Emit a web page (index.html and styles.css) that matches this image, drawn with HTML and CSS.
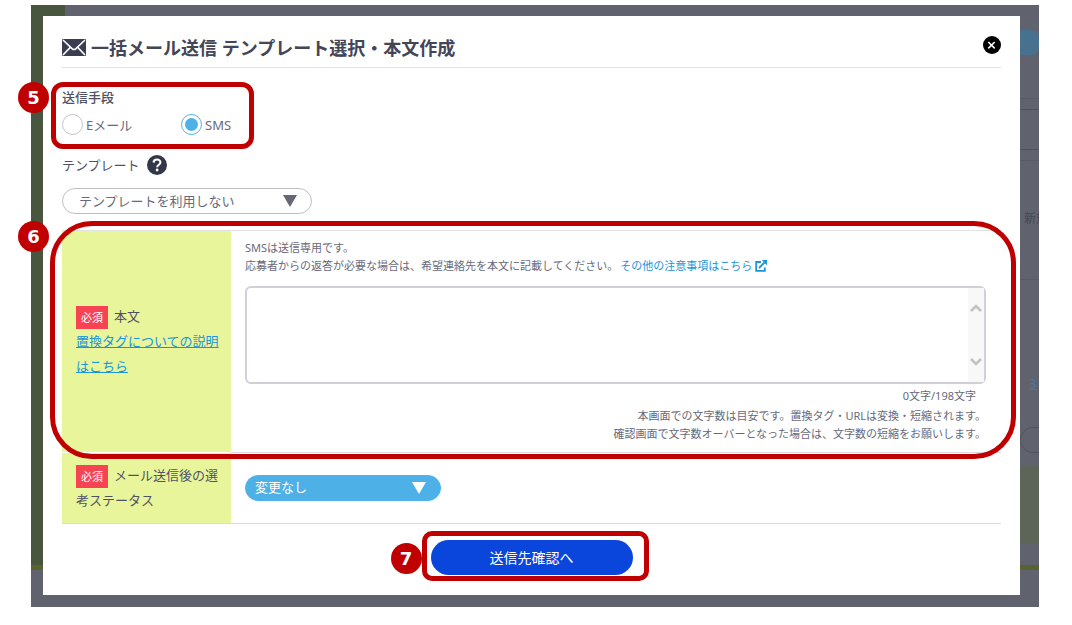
FILE: index.html
```html
<!DOCTYPE html>
<html lang="ja">
<head>
  <meta charset="UTF-8" />
  <meta name="viewport" content="width=device-width, initial-scale=1" />
  <title>一括メール送信</title>
  <link rel="stylesheet" href="styles.css">
</head>
<body>
  <div class="screen">
    <!-- Dimmed page behind the modal -->
    <div class="backdrop">
      <div class="back-main">
        <div class="back-sidebar"></div>
        <div class="back-content">
          <div class="back-button"></div>
          <div class="back-filter"><div class="back-field"></div></div>
          <div class="back-heading">新規</div>
          <div class="back-row"><a href="#">3</a></div>
          <div class="back-pill"></div>
          <div class="back-green"></div>
        </div>
      </div>
      <div class="back-footer"></div>
    </div>

    <form class="modal">
      <header class="modal-header">
        <h1>
          <svg class="mail-icon" viewBox="0 0 24 18" width="24" height="18" aria-hidden="true">
            <rect width="24" height="17" rx="1" fill="#3b3e50" />
            <path d="M1 1 L10.3 9.8 Q12 11.2 13.7 9.8 L23 1 M1 16 L8.3 8.4 M23 16 L15.7 8.4" fill="none" stroke="#fff" stroke-width="1.6" />
          </svg>
          一括メール送信 テンプレート選択・本文作成
        </h1>
        <button type="button" class="close" aria-label="閉じる">
          <svg viewBox="0 0 18 18" width="18" height="18">
            <circle cx="9" cy="9" r="9" />
            <path d="M5.3 6 L11.7 12.4 M11.7 6 L5.3 12.4" stroke="#fff" stroke-width="1.5" />
          </svg>
        </button>
      </header>

      <div class="method-box">
        <fieldset class="method">
          <legend>送信手段</legend>
          <div class="radios">
            <label><input type="radio" name="method" value="mail" />Eメール</label>
            <label><input type="radio" name="method" value="sms" checked />SMS</label>
          </div>
        </fieldset>
        <span class="frame"></span>
        <span class="step">5</span>
      </div>

      <div class="template-label">
        <label for="template">テンプレート</label>
        <svg viewBox="0 0 20 20" width="20" height="20" aria-hidden="true">
          <circle cx="10" cy="10" r="10" fill="#343747" />
          <path d="M6.6 7.6 C6.7 3.6 13.4 3.6 13.4 7.4 C13.4 9.7 10.2 9.8 10.2 12.2" fill="none" stroke="#fff" stroke-width="2.1" />
          <circle cx="10.1" cy="15" r="1.4" fill="#fff" />
        </svg>
      </div>
      <div class="select template-select">
        <select id="template"><option>テンプレートを利用しない</option></select>
        <svg viewBox="0 0 14 12" width="14" height="12"><path d="M0 0 H14 L7 12 Z" /></svg>
      </div>

      <div class="rows">
        <div class="row">
          <div class="row-label">
            <span class="required">必須</span><label for="message">本文</label><br />
            <a href="#">置換タグについての説明はこちら</a>
          </div>
          <div class="row-body">
            <p>SMSは送信専用です。</p>
            <p>応募者からの返答が必要な場合は、希望連絡先を本文に記載してください。<a class="notice" href="#">その他の注意事項はこちら
              <svg viewBox="0 0 12 12" width="12" height="12" aria-hidden="true">
                <path d="M6 2 H1.2 V10.8 H9.8 V7.5 M4 8 L9.5 2.5" fill="none" stroke="#1a95da" stroke-width="1.8" />
                <path d="M6.8 0 H12 V5.2 Z" fill="#1a95da" />
              </svg></a></p>
            <div class="message">
              <textarea id="message"></textarea>
              <div class="scroll">
                <svg viewBox="0 0 12 8" width="12" height="8"><path d="M1 7 L6 2 L11 7" /></svg>
                <svg viewBox="0 0 12 8" width="12" height="8"><path d="M1 1 L6 6 L11 1" /></svg>
              </div>
            </div>
            <p class="count">0文字/198文字</p>
            <div class="notes">
              <p>本画面での文字数は目安です。置換タグ・URLは変換・短縮されます。</p>
              <p>確認画面で文字数オーバーとなった場合は、文字数の短縮をお願いします。</p>
            </div>
          </div>
          <span class="frame frame-large"></span>
          <span class="step">6</span>
        </div>

        <div class="row">
          <div class="row-label">
            <span class="required">必須</span><label for="status">メール送信後の選考ステータス</label>
          </div>
          <div class="row-body row-middle">
            <div class="select status-select">
              <select id="status"><option>変更なし</option></select>
              <svg viewBox="0 0 14 12" width="14" height="12"><path d="M0 0 H14 L7 12 Z" /></svg>
            </div>
          </div>
        </div>
      </div>

      <div class="actions">
        <button type="button" class="submit">送信先確認へ</button>
        <span class="frame"></span>
        <span class="step">7</span>
      </div>
    </form>
  </div>
</body>
</html>
```

FILE: styles.css
```css
* {
  box-sizing: border-box;
}
body {
  margin: 0;
  background: #fff;
  color: #686a7a;
  font-family: "Noto Sans", "Noto Sans CJK JP", sans-serif;
  font-size: 13px;
  line-height: 18px;
}
p, h1, fieldset, legend {
  margin: 0;
  padding: 0;
}
select, textarea, button, input {
  margin: 0;
  font: inherit;
}
a {
  color: #1a95da;
}

/* backdrop and modal share one grid cell */
.screen {
  display: grid;
  margin: 5px 33px 0 31px;
}
.backdrop, .modal {
  grid-area: 1 / 1;
  min-width: 0;
}

.backdrop {
  display: flex;
  flex-direction: column;
  overflow: hidden;
  background: #60636d;
}
.back-main {
  flex: 1;
  display: flex;
  justify-content: space-between;
  border-bottom: 5px solid #586330;
}
.back-sidebar {
  width: 34px;
  background: #48553f;
}
.back-content {
  width: 19px;
  padding-top: 25px;
  color: #454857;
  font-size: 12px;
  white-space: nowrap;
}
.back-button {
  height: 25px;
  border-radius: 0 8px 8px 0;
  background: #487190;
}
.back-filter {
  height: 63px;
  margin-top: 43px;
  padding-top: 10px;
  border: solid #585b67;
  border-width: 1px 0;
}
.back-field {
  height: 41px;
  border: solid #4d505d;
  border-width: 1px 0;
}
.back-heading {
  height: 70px;
  padding-left: 4px;
  margin-top: 49px;
  border-bottom: 1px solid #585b67;
  overflow: hidden;
}
.back-row {
  padding: 94px 0 0 9px;
}
.back-row a {
  color: #3a7cab;
  font-size: 13px;
}
.back-pill {
  width: 60px;
  height: 26px;
  margin-top: 34px;
  border: 1px solid #50535f;
  border-radius: 13px;
}
.back-green {
  height: 78px;
  margin-top: 13px;
  background: #5c6557;
}
.back-footer {
  height: 37px;
}

.modal {
  position: relative;
  margin: 11px 19px 12px 12px;
  padding: 20px 19px;
  background: #fff;
}
.modal-header {
  display: flex;
  justify-content: space-between;
  align-items: flex-start;
  padding-bottom: 7px;
  border-bottom: 1px solid #dfe1e4;
}
h1 {
  display: flex;
  align-items: center;
  gap: 5px;
  color: #444658;
  font-size: 18px;
  line-height: 24px;
}
.close {
  display: flex;
  padding: 0;
  border: 0;
  background: none;
}

/* red guide frames and step numbers */
.frame {
  position: absolute;
  z-index: 1;
  inset: -9px -16px -6px -9px;
  border: 5px solid #c00000;
  border-radius: 10px;
  pointer-events: none;
}
.frame-large {
  inset: -10px -15px -6px -12px;
  border-radius: 42px;
}
.step {
  position: absolute;
  z-index: 1;
  top: -10px;
  left: -44px;
  width: 31px;
  height: 31px;
  border-radius: 50%;
  background: #c00000;
  color: #fff;
  font: bold 18px/31px "DejaVu Sans", sans-serif;
  text-align: center;
}

.method-box {
  position: relative;
  width: 180px;
  margin-top: 20px;
}
.method-box .frame {
  inset: -6px -12px -14px -11px;
  border-radius: 12px;
}
.method-box .step {
  top: -6px;
}
.method {
  border: 0;
}
legend {
  color: #505263;
  font-weight: 500;
}
.radios {
  display: grid;
  grid-template-columns: 119px 1fr;
  margin-top: 8px;
}
.radios label {
  display: flex;
  align-items: center;
  gap: 3px;
}
.radios input {
  appearance: none;
  width: 21px;
  height: 21px;
  border: 1px solid #c2c3ca;
  border-radius: 50%;
}
.radios input:checked {
  border-color: #4db1e8;
  background: #4db1e8;
  background-clip: content-box;
  padding: 3px;
}

.template-label {
  display: flex;
  align-items: center;
  gap: 7px;
  margin-top: 20px;
  color: #505263;
}
.select {
  position: relative;
  height: 26px;
}
.select select {
  display: block;
  appearance: none;
  width: 100%;
  height: 100%;
  padding: 0 30px 1px 16px;
  border: 1px solid #bfc0c6;
  border-radius: 13px;
  background: #fff;
  color: #686a7a;
}
.select svg {
  position: absolute;
  top: 7px;
  right: 15px;
  fill: #666876;
  pointer-events: none;
}
.template-select {
  width: 250px;
  margin-top: 13px;
}
.status-select {
  width: 196px;
}
.status-select select {
  padding-left: 9px;
  border-color: #4db1e8;
  background: #4db1e8;
  color: #fff;
}
.status-select svg {
  fill: #fff;
}

.rows {
  margin-top: 16px;
  border-top: 1px solid #dfe1e4;
}
.row {
  position: relative;
  display: grid;
  grid-template-columns: 169px 1fr;
}
.row-label {
  align-content: center;
  padding: 10px 10px 10px 14px;
  border-bottom: 1px solid #fff;
  background: #e8f59a;
  color: #505263;
  line-height: 25px;
}
.required {
  display: inline-block;
  margin-right: 6px;
  padding: 0 5px;
  background: #f84353;
  color: #fff;
  font-size: 11px;
  line-height: 23px;
  vertical-align: middle;
}
.row-body {
  padding: 8px 15px 9px 14px;
  border-bottom: 1px solid #d8dade;
  font-size: 11px;
}
.row-middle {
  display: flex;
  align-items: center;
  font-size: 13px;
}
.row:last-child .row-label {
  border-color: #d8dade;
}
.notice {
  margin-left: 2px;
  text-decoration: none;
}
.notice svg {
  vertical-align: -2px;
}
.message {
  position: relative;
  height: 98px;
  margin-top: 11px;
}
textarea {
  display: block;
  width: 100%;
  height: 100%;
  padding: 6px 24px 6px 8px;
  border: 2px solid #d0d0d7;
  border-radius: 6px;
  resize: none;
}
.scroll {
  position: absolute;
  inset: 2px 2px 2px auto;
  display: flex;
  flex-direction: column;
  justify-content: space-between;
  align-items: center;
  width: 16px;
  padding: 16px 0;
  background: #f8f8f8;
}
.scroll path {
  fill: none;
  stroke: #c2c2c2;
  stroke-width: 2.5;
}
.count {
  margin-top: 3px;
  padding-right: 10px;
  text-align: right;
}
.notes {
  margin-top: 2px;
  text-align: right;
}

.actions {
  position: relative;
  width: 202px;
  margin: 16px auto 0;
}
.actions .step {
  top: 3px;
  left: -40px;
}
.submit {
  display: block;
  width: 100%;
  height: 35px;
  border: 0;
  border-radius: 18px;
  background: #0a46dc;
  color: #fff;
  font-size: 14px;
}
```
